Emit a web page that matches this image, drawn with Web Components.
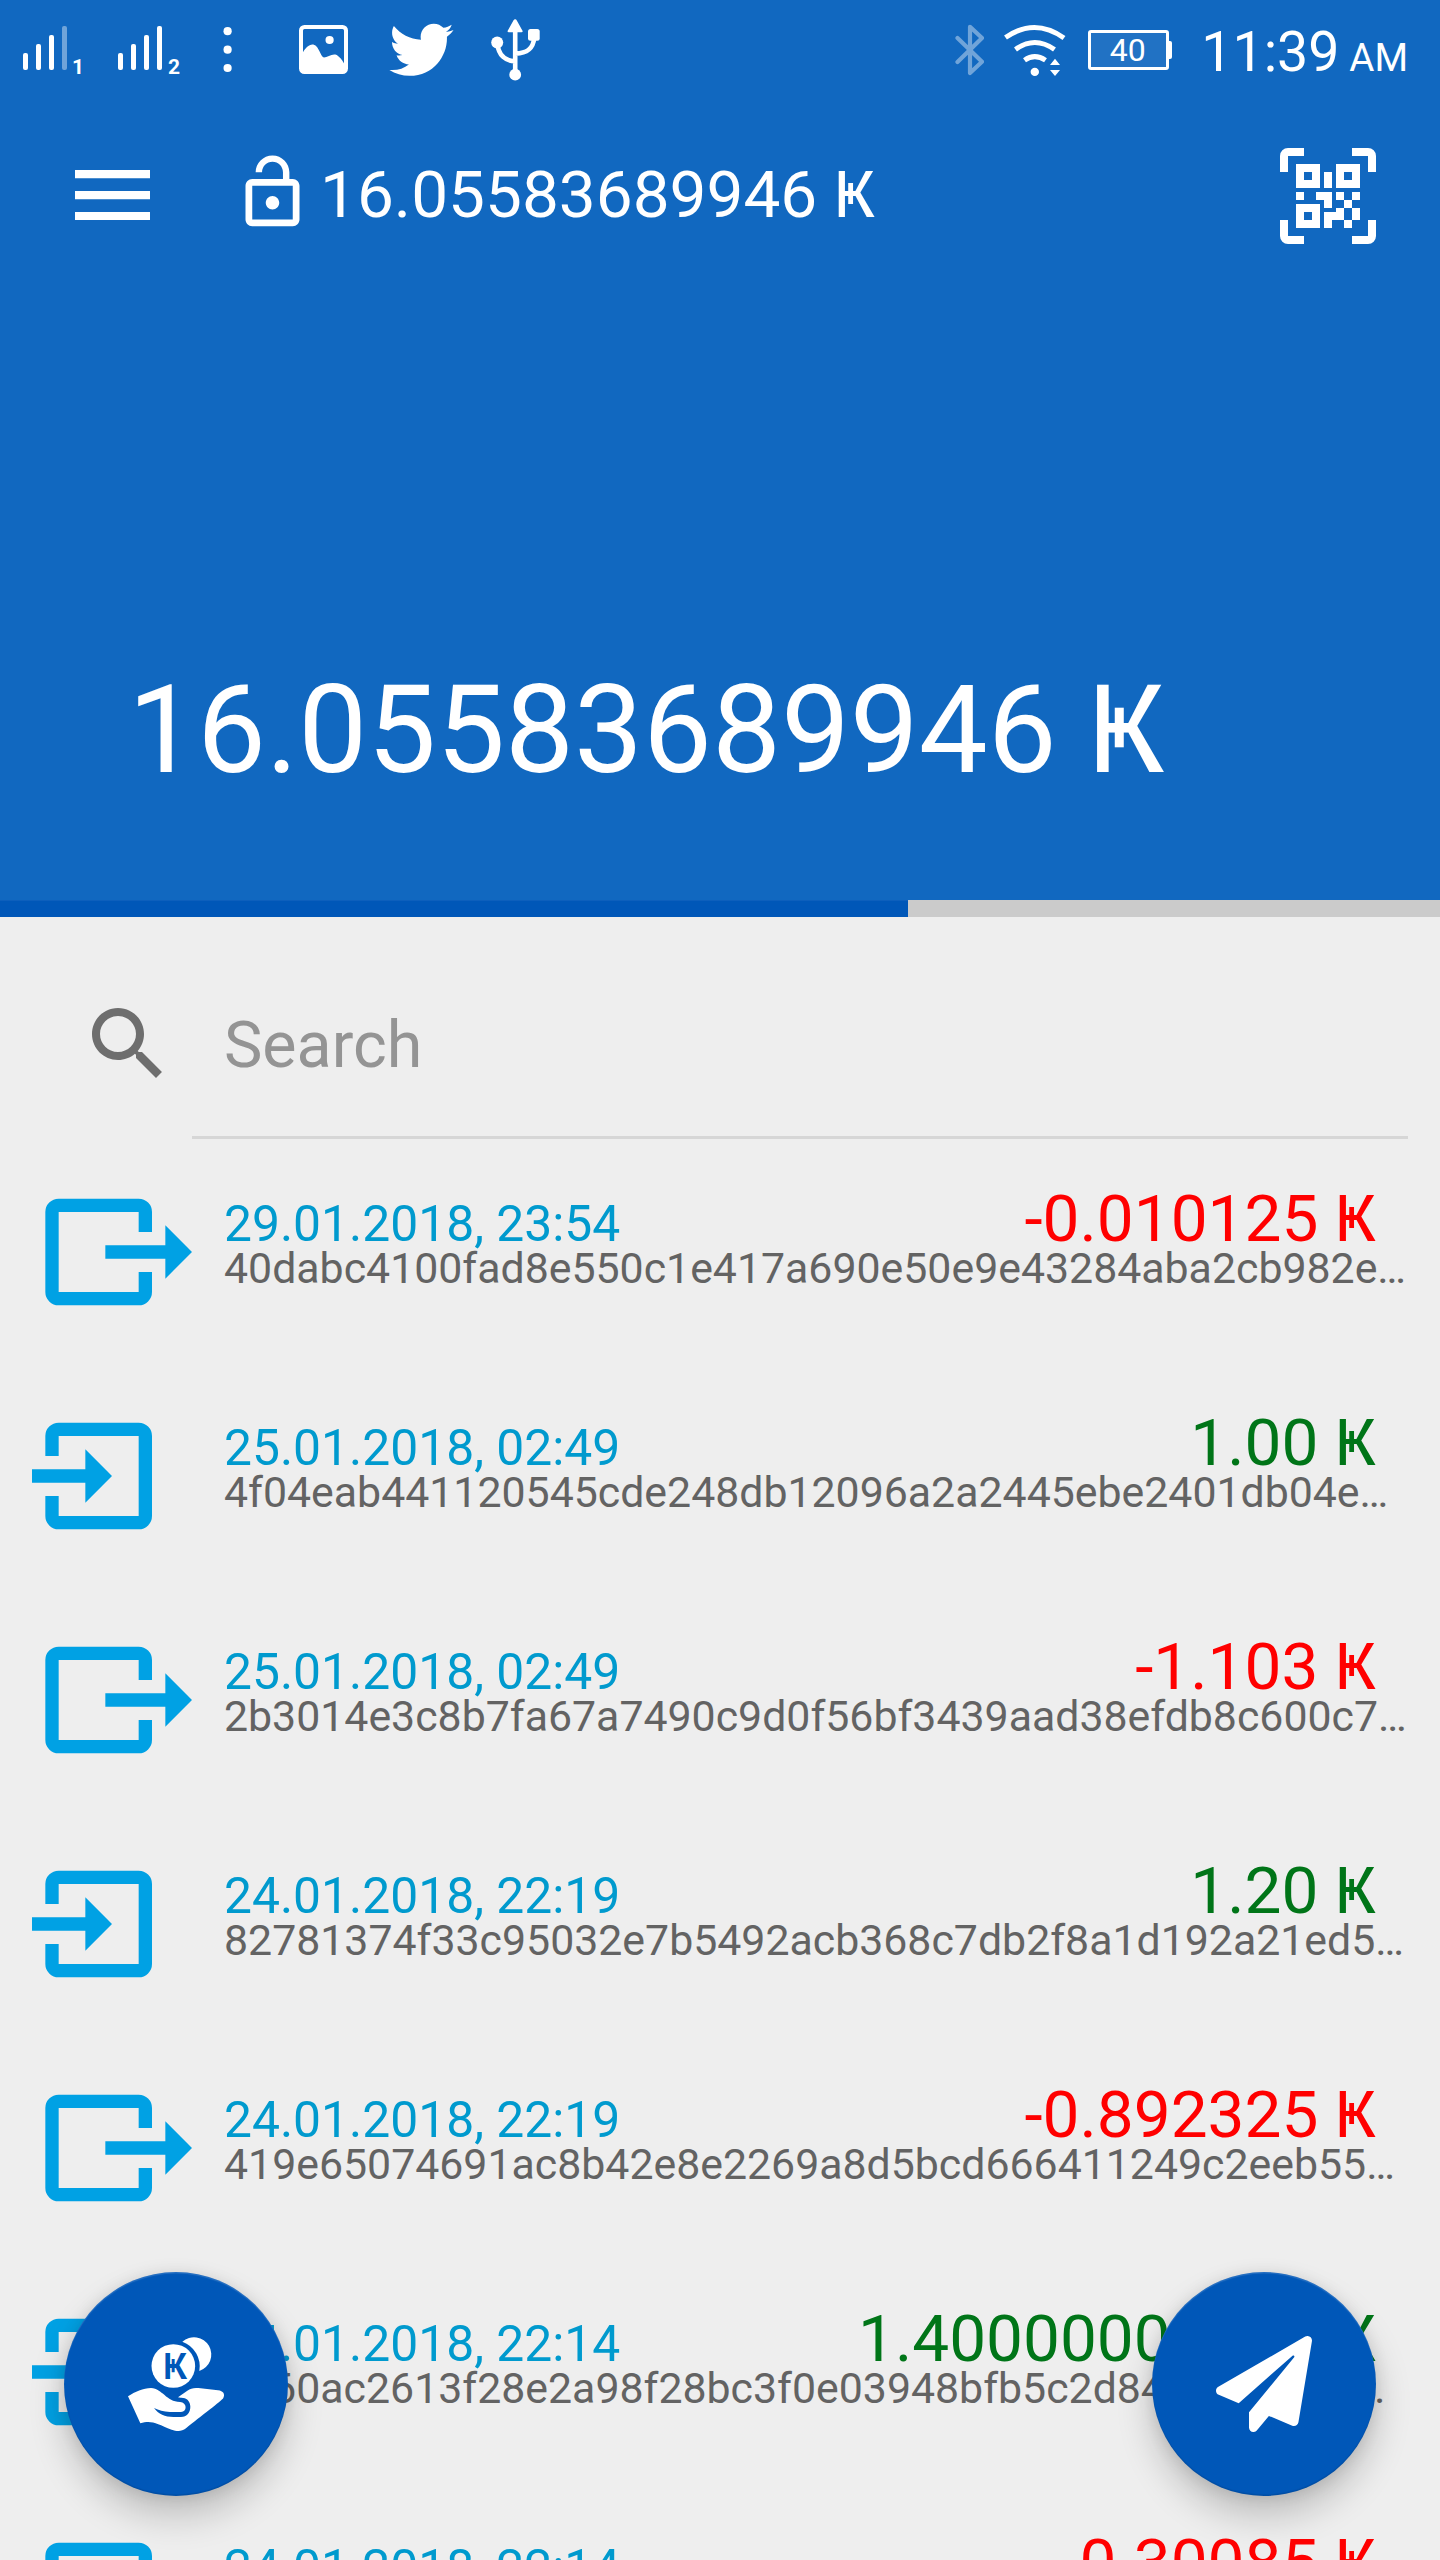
<!DOCTYPE html>
<html lang="en">
<head>
<meta charset="utf-8">
<title>Wallet</title>
<style>
  html, body { margin: 0; padding: 0; background: #eeeeee; }
  body { font-family: Roboto, "Noto Sans", sans-serif; }
</style>
</head>
<body>
<wallet-app></wallet-app>

<template id="status-bar">
  <style>
    :host { display: flex; height: 100px; box-sizing: border-box; padding: 0 33px 0 23px; justify-content: space-between; color: #fff; }
    .side { display: flex; height: 100px; }
    svg { display: block; flex: none; }
    .sim { font-size: 21px; font-weight: 700; line-height: 24px; margin-top: 55px; width: 12px; }
    .first { margin-left: -2px; width: 14px; }
    .clock { font-size: 55.5px; line-height: 66px; margin: 20px 0 0 29px; white-space: nowrap; width: 133px; }
    .ampm { font-size: 38.5px; line-height: 46px; margin: 35px -1px 0 15px; white-space: nowrap; }
    .battery { display: flex; align-items: center; justify-content: center; box-sizing: border-box; width: 81px; height: 40px; margin: 30px 3px 0 22px; padding-right: 2px; border: 3px solid #fff; border-radius: 3px; background: rgba(255,255,255,.07); font-size: 32px; position: relative; }
    .battery::after { content: ""; position: absolute; left: 78px; top: 8px; width: 3px; height: 18px; background: #fff; border-radius: 0 2px 2px 0; }
  </style>
  <div class="side">
    <svg width="51" height="100" viewBox="23 0 51 100" fill="#fff"><rect x="23" y="53" width="5" height="17" rx="2"/><rect x="36" y="44" width="5" height="26" rx="2"/><rect x="49" y="35" width="5" height="35" rx="2"/><rect x="62" y="26" width="5" height="44" rx="2" opacity=".4"/></svg>
    <span class="sim first">1</span>
    <svg style="margin-left:32px" width="50" height="100" viewBox="118 0 50 100" fill="#fff"><rect x="118" y="53" width="5" height="17" rx="2"/><rect x="131" y="44" width="5" height="26" rx="2"/><rect x="144" y="35" width="5" height="35" rx="2"/><rect x="157" y="26" width="5" height="44" rx="2"/></svg>
    <span class="sim">2</span>
    <svg style="margin-left:42px" width="12" height="100" viewBox="222 0 12 100" fill="#fff"><circle cx="227.6" cy="31.2" r="4.1"/><circle cx="227.6" cy="49.7" r="4.1"/><circle cx="227.6" cy="68" r="4.1"/></svg>
    <svg style="margin-left:65px" width="49" height="100" viewBox="299 0 49 100" fill="#fff"><rect x="301" y="27" width="45" height="45" rx="3.5" fill="none" stroke="#fff" stroke-width="4"/><path d="M302 54C306 46 312 42 316 46C320 50 321 57 324 57.5C328 57 334 52 338 56C342 59 343 62 345 65V72H302Z"/><circle cx="329.6" cy="40" r="4.1"/></svg>
    <svg style="margin-left:41px" width="65" height="100" viewBox="0 0 65 100" fill="#fff"><path transform="translate(.4 17.7) scale(.1252)" d="M459.37 151.716c.325 4.548.325 9.097.325 13.645 0 138.72-105.583 298.558-298.558 298.558-59.452 0-114.68-17.219-161.137-47.106 8.447.974 16.568 1.299 25.34 1.299 49.055 0 94.213-16.568 130.274-44.832-46.132-.975-84.792-31.188-98.112-72.772 6.498.974 12.995 1.624 19.818 1.624 9.421 0 18.843-1.3 27.614-3.573-48.081-9.747-84.143-51.98-84.143-102.985v-1.299c13.969 7.797 30.214 12.67 47.431 13.319-28.264-18.843-46.781-51.005-46.781-87.391 0-19.492 5.197-37.36 14.294-52.954 51.655 63.675 129.3 105.258 216.365 109.807-1.624-7.797-2.599-15.918-2.599-24.04 0-57.828 46.782-104.934 104.934-104.934 30.213 0 57.502 12.67 76.67 33.137 23.715-4.548 46.456-13.32 66.599-25.34-7.798 24.366-24.366 44.833-46.132 57.827 21.117-2.273 41.584-8.122 60.426-16.243-14.292 20.791-32.161 39.308-52.628 54.253z"/></svg>
    <svg style="margin-left:36px" width="52" height="100" viewBox="490 0 52 100" fill="#fff"><path d="M515.2 19.2q1 0 1.6 1.4l5.7 10.2q.5 1.4-1 1.4h-12.8q-1.5 0-1-1.4l5.700-10.200q.7-1.400 1.800-1.400z"/><path d="M515.2 28V76M497.500 44C498.500 55 505 61 515.200 61.300M534.200 38C533 50 526 53.300 515.500 53.600" fill="none" stroke="#fff" stroke-width="4.600"/><circle cx="515.200" cy="74.700" r="5.900"/><circle cx="497.200" cy="42.600" r="6"/><rect x="528" y="29" width="11.700" height="11.700" rx="2.500"/></svg>
  </div>
  <div class="side">
    <svg width="29" height="100" viewBox="955 0 29 100"><path d="M957.500 38L982 61.800L970 73V26.800L982 38L957.500 62" fill="none" stroke="#fff" stroke-width="4.200" stroke-linecap="round" stroke-linejoin="round" opacity=".4"/></svg>
    <svg style="margin-left:19px" width="63" height="100" viewBox="1003 0 63 100" fill="#fff"><path d="M1005.500 37.500Q1034.700 17.300 1064 38M1015.500 49.500Q1034.700 35.500 1054.500 49.500M1024.500 60.300Q1034.700 53 1045.500 60.300" fill="none" stroke="#fff" stroke-width="5"/><circle cx="1034.800" cy="71.900" r="4.200"/><path d="M1050 65L1055 58.800L1060 65ZM1050 70H1060L1055 76Z"/></svg>
    <span class="battery">40</span>
    <span class="clock">11:39</span><span class="ampm">AM</span>
  </div>
</template>

<template id="app-bar">
  <style>
    :host { display: flex; align-items: center; height: 192px; padding: 0 64px 0 75px; color: #fff; }
    svg { display: block; flex: none; }
    .menu { margin-top: -2px; }
    .title { font-size: 65.7px; line-height: 78px; margin: -2px 0 0 7px; white-space: nowrap; flex: 1; }
    .lock { margin-left: 82px; margin-top: -8px; }
  </style>
  <svg class="menu" width="75" height="50" viewBox="0 0 75 50" fill="#fff"><path d="M0 0h75v8.300H0zM0 21h75v8.300H0zM0 42h75v8H0z"/></svg>
  <svg class="lock" width="81" height="81" viewBox="0 0 24 24" fill="#fff"><path d="M12 17c1.100 0 2-.9 2-2s-.9-2-2-2-2 .9-2 2 .9 2 2 2zm6-9h-1V6c0-2.760-2.240-5-5-5S7 3.240 7 6h1.900c0-1.710 1.390-3.100 3.100-3.100 1.710 0 3.100 1.390 3.100 3.100v2H6c-1.100 0-2 .9-2 2v10c0 1.100.9 2 2 2h12c1.100 0 2-.9 2-2V10c0-1.100-.9-2-2-2zm0 12H6V10h12v10z"/></svg>
  <span class="title"><slot></slot></span>
  <svg width="96" height="96" viewBox="0 0 24 24" fill="#fff"><path fill-rule="evenodd" d="M2 0H6V2H2V6H0V2A2 2 0 0 1 2 0zM18 0H22A2 2 0 0 1 24 2V6H22V2H18zM0 18H2V22H6V24H2A2 2 0 0 1 0 22zM22 18H24V22A2 2 0 0 1 22 24H18V22H22zM4 4H10V10H4zM6 6V8H8V6zM14 4H20V10H14zM16 6V8H18V6zM4 14H10V20H4zM6 16V18H8V16zM11 6H13V10H11zM4 11H6V13H4zM9 11H13V15H11V13H9zM14 11H16V13H14zM18 11H20V13H18zM16 13H18V15H16zM14 15H16V18H13V20H11V16H14zM18 15H20V18H18zM16 18H18V20H16z"/></svg>
</template>

<template id="balance-header">
  <style>
    :host { display: flex; flex-direction: column; height: 900px; background: #1168c0; color: #fff; }
    .balance { padding: 366px 0 0 128px; font-size: 122.7px; line-height: 144px; white-space: nowrap; }
  </style>
  <status-bar></status-bar>
  <app-bar><slot name="title"></slot></app-bar>
  <div class="balance"><slot></slot></div>
</template>

<template id="sync-progress">
  <style>
    :host { display: block; height: 16.5px; background: #cbcbcb; }
    div { height: 100%; width: 908px; box-sizing: border-box; border-top: 1px solid #0d5fbc; background: #0057b8; }
  </style>
  <div></div>
</template>

<template id="search-field">
  <style>
    :host { display: flex; align-items: center; height: 223.5px; padding: 0 32px 0 80px; }
    svg { display: block; flex: none; margin-top: 31px; }
    .wrap { display: flex; flex-direction: column; flex: 1; margin-left: 16px; height: 223.5px; }
    .text { flex: 1; padding: 89.5px 0 0 32px; font-size: 64.6px; line-height: 78px; color: #949494; }
    .rule { height: 2.5px; margin-bottom: 1.5px; background: #d6d6d6; }
  </style>
  <svg width="96" height="96" viewBox="0 0 24 24" fill="#6e6e6e"><path d="M15.500 14h-.79l-.28-.27C15.410 12.590 16 11.110 16 9.500 16 5.910 13.090 3 9.500 3S3 5.910 3 9.500 5.910 16 9.500 16c1.610 0 3.090-.59 4.230-1.570l.27.28v.79l5 4.990L20.490 19l-4.990-5zm-6 0C7.010 14 5 11.990 5 9.500S7.010 5 9.500 5 14 7.010 14 9.500 11.990 14 9.500 14z"/></svg>
  <div class="wrap"><div class="text"><slot></slot></div><div class="rule"></div></div>
</template>

<template id="tx-row">
  <style>
    :host { display: flex; height: 224px; overflow: hidden; }
    .icon { flex: none; width: 224px; display: flex; align-items: center; }
    svg { display: block; }
    .out, .in { display: none; }
    :host([kind="out"]) .out, :host([kind="in"]) .in { display: block; }
    .body { flex: 1; min-width: 0; padding: 53.5px 0 0; }
    .top { display: flex; justify-content: space-between; align-items: baseline; height: 49px; padding-right: 64px; line-height: 50px; white-space: nowrap; }
    .date { font-size: 49.8px; color: #009ace; }
    .amount { font-size: 65.7px; color: #007518; }
    :host([kind="out"]) .amount { color: #ff0000; }
    .hash { font-size: 42.83px; line-height: 50px; color: #636363; white-space: nowrap; }
  </style>
  <div class="icon">
    <svg class="out" width="224" height="160" viewBox="0 0 33.600 24" fill="#00a1e4"><path d="M8.800 4H20.800A2 2 0 0 1 22.800 6V9H20.800V6H8.800V18H20.800V15H22.800V18A2 2 0 0 1 20.800 20H8.800A2 2 0 0 1 6.800 18V6A2 2 0 0 1 8.800 4zM15.800 11H24.800V8L28.800 12L24.800 16V13H15.800z"/></svg>
    <svg class="in" width="224" height="160" viewBox="0 0 33.600 24" fill="#00a1e4"><path d="M8.800 4H20.800A2 2 0 0 1 22.800 6V18A2 2 0 0 1 20.800 20H8.800A2 2 0 0 1 6.800 18V15H8.800V18H20.800V6H8.800V9H6.800V6A2 2 0 0 1 8.800 4zM4.800 11H12.800V8L16.800 12L12.800 16V13H4.800z"/></svg>
  </div>
  <div class="body">
    <div class="top"><span class="date"><slot name="date"></slot></span><span class="amount"><slot name="amount"></slot></span></div>
    <div class="hash"><slot></slot></div>
  </div>
</template>

<template id="fab-button">
  <style>
    :host { display: flex; align-items: center; justify-content: center; width: 224px; height: 224px; border-radius: 50%; background: #0057b8; box-shadow: 0 20px 36px rgba(0,0,0,.2), 0 2px 16px rgba(0,0,0,.1), inset 0 1.5px 1px rgba(255,255,255,.15), inset 0 -1.5px 1px rgba(0,0,0,.1); }
  </style>
  <slot></slot>
</template>

<template id="wallet-app">
  <style>
    :host { display: block; position: relative; width: 1440px; height: 2560px; overflow: hidden; background: #eeeeee; }
    .fabs { position: absolute; left: 64px; right: 64px; bottom: 64px; display: flex; justify-content: space-between; }
    svg { display: block; }
    text { font-family: Roboto, "Noto Sans", sans-serif; font-weight: 500; }
  </style>
  <balance-header><span slot="title">16.05583689946 Ҝ</span>16.05583689946 Ҝ</balance-header>
  <sync-progress></sync-progress>
  <search-field>Search</search-field>
  <main>
    <tx-row kind="out"><span slot="date">29.01.2018, 23:54</span><span slot="amount">-0.010125 Ҝ</span>40dabc4100fad8e550c1e417a690e50e9e43284aba2cb982e…</tx-row>
    <tx-row kind="in"><span slot="date">25.01.2018, 02:49</span><span slot="amount">1.00 Ҝ</span>4f04eab441120545cde248db12096a2a2445ebe2401db04e…</tx-row>
    <tx-row kind="out"><span slot="date">25.01.2018, 02:49</span><span slot="amount">-1.103 Ҝ</span>2b3014e3c8b7fa67a7490c9d0f56bf3439aad38efdb8c600c7…</tx-row>
    <tx-row kind="in"><span slot="date">24.01.2018, 22:19</span><span slot="amount">1.20 Ҝ</span>82781374f33c95032e7b5492acb368c7db2f8a1d192a21ed5…</tx-row>
    <tx-row kind="out"><span slot="date">24.01.2018, 22:19</span><span slot="amount">-0.892325 Ҝ</span>419e65074691ac8b42e8e2269a8d5bcd666411249c2eeb55…</tx-row>
    <tx-row kind="in"><span slot="date">24.01.2018, 22:14</span><span slot="amount">1.40000000000 Ҝ</span>4760ac2613f28e2a98f28bc3f0e03948bfb5c2d84e71609d3…</tx-row>
    <tx-row kind="out"><span slot="date">24.01.2018, 22:14</span><span slot="amount">-0.30085 Ҝ</span></tx-row>
  </main>
  <div class="fabs">
    <fab-button>
      <svg width="224" height="224" viewBox="-48 -114 672 672" fill="#fff"><path d="M307 95A52 52 0 1 1 358 183A79 79 0 0 0 307 95z"/><circle cx="280" cy="168" r="65.500"/><path d="M144 259C165 245 190 234 213 234C248 236 258 275 300 276C322 277 322 306 303 306H270C250 305 237 301 222 294C235 312 255 321 280 321H303C321 320 331 307 331 290C331 272 318 262 302 263L294 262L322 242C332 235 340 233 355 234L414 241C430 243 436 252 430 264C426 272 360 320 318 355C304 366 290 364 275 359C230 341 214 329 181 340Z"/><text x="248" y="208" font-size="112" fill="#0057b8">Ҝ</text></svg>
    </fab-button>
    <fab-button>
      <svg width="96" height="96" viewBox="0 0 512 512" fill="#fff"><path d="M476 3.200L12.500 270.600c-18.100 10.400-15.800 35.600 2.200 43.200L121 358.400l287.300-253.200c5.500-4.900 13.300 2.600 8.600 8.300L176 407v80.500c0 23.600 28.500 32.900 42.500 15.800L282 426l124.600 52.200c14.200 6 30.400-2.900 33-18.200l72-432C515 7.800 493.300-6.800 476 3.200z"/></svg>
    </fab-button>
  </div>
</template>

<script>
  for (const name of ["status-bar", "app-bar", "balance-header", "sync-progress", "search-field", "tx-row", "fab-button", "wallet-app"]) {
    const template = document.getElementById(name);
    customElements.define(name, class extends HTMLElement {
      constructor() {
        super();
        this.attachShadow({ mode: "open" }).append(document.importNode(template.content, true));
      }
    });
  }
</script>
</body>
</html>
